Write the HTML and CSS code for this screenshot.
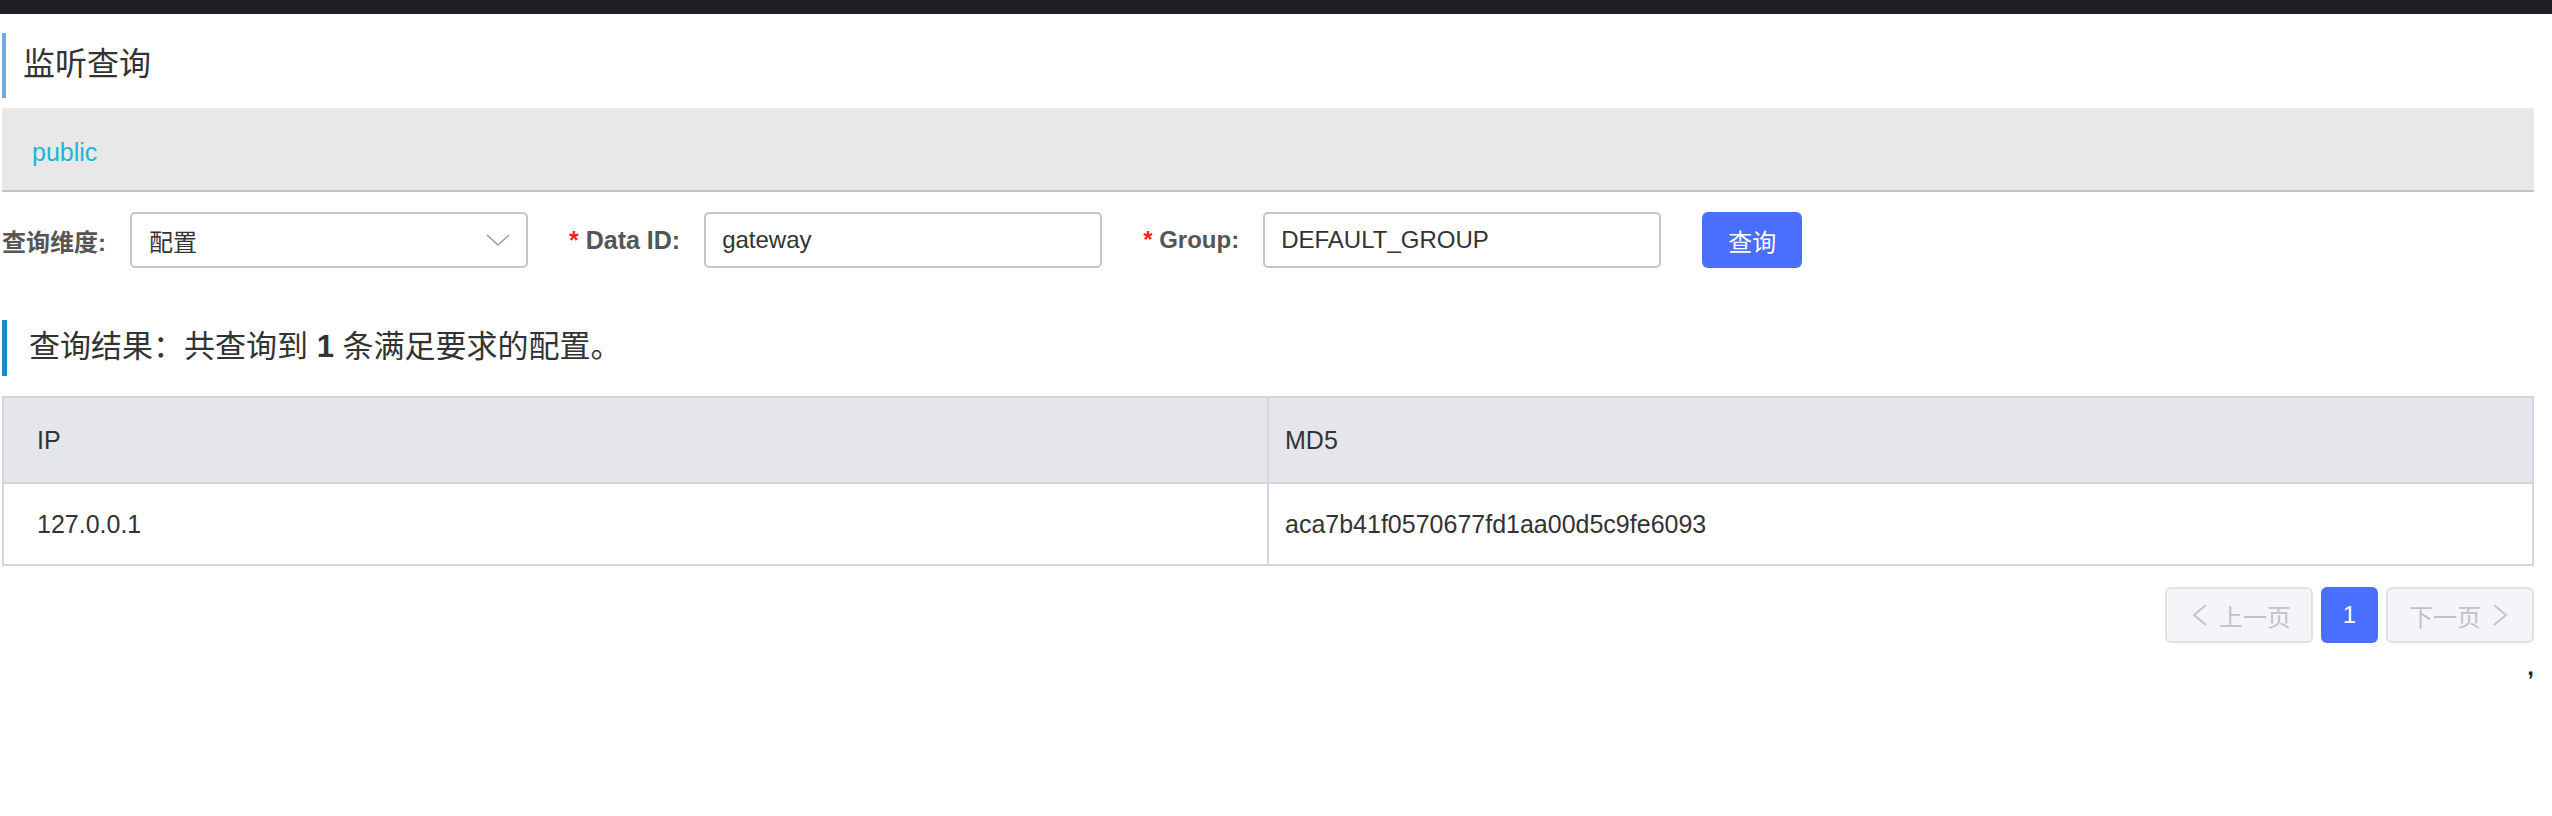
FILE: index.html
```html
<!DOCTYPE html>
<html lang="zh-CN">
<head>
<meta charset="utf-8">
<title>监听查询</title>
<link rel="stylesheet" href="styles.css">
</head>
<body>
<div class="topbar"></div>
<div class="page">
  <h1 class="page-title">监听查询</h1>
  <div class="ns-bar"><span class="ns-item">public</span></div>
  <div class="query-form">
    <div class="form-item">
      <label class="form-label">查询维度:</label>
      <div class="select">
        <span class="select-value">配置</span>
        <svg class="select-arrow" width="24" height="12" viewBox="0 0 24 12"><polyline points="1,1 12,11 23,1" fill="none" stroke="#9a9a9a" stroke-width="1.5"/></svg>
      </div>
    </div>
    <div class="form-item">
      <label class="form-label form-label-latin"><span class="req">*</span> Data ID:</label>
      <div class="input">gateway</div>
    </div>
    <div class="form-item">
      <label class="form-label"><span class="req">*</span> Group:</label>
      <div class="input">DEFAULT_GROUP</div>
    </div>
    <button class="btn-primary" type="button">查询</button>
  </div>
  <h2 class="result-title">查询结果：共查询到 <strong>1</strong> 条满足要求的配置。</h2>
  <table class="result-table">
    <thead>
      <tr><th class="col-ip">IP</th><th class="col-md5">MD5</th></tr>
    </thead>
    <tbody>
      <tr><td class="col-ip">127.0.0.1</td><td class="col-md5">aca7b41f0570677fd1aa00d5c9fe6093</td></tr>
    </tbody>
  </table>
  <div class="pagination">
    <button class="pg-btn pg-prev" type="button"><svg width="16" height="22" viewBox="0 0 16 22"><polyline points="14,1 2,11 14,21" fill="none" stroke="#c4c4c4" stroke-width="2"/></svg><span>上一页</span></button>
    <button class="pg-btn pg-current" type="button">1</button>
    <button class="pg-btn pg-next" type="button"><span>下一页</span><svg width="16" height="22" viewBox="0 0 16 22"><polyline points="2,1 14,11 2,21" fill="none" stroke="#c4c4c4" stroke-width="2"/></svg></button>
  </div>
  <div class="tail">,</div>
</div>
</body>
</html>
```
FILE: styles.css
```css
* { box-sizing: border-box; }
html, body {
  margin: 0;
  padding: 0;
  background: #ffffff;
  font-family: "Liberation Sans", "Noto Sans CJK SC", sans-serif;
  color: #333333;
}
.topbar {
  height: 14px;
  background: #1d1f24;
}
.page {
  padding: 0 18px 0 2px;
}
.page-title {
  margin: 19px 0 0 0;
  height: 65px;
  line-height: 63px;
  border-left: 4px solid #74a8d8;
  padding-left: 17px;
  font-size: 32px;
  font-weight: normal;
  color: #333333;
}
.ns-bar {
  margin-top: 10px;
  height: 84px;
  background: #e8e8e8;
  border-bottom: 2px solid #c3c3c3;
  padding: 6px 0 0 30px;
  display: flex;
  align-items: center;
}
.ns-item {
  font-size: 25px;
  color: #1db5d6;
}
.query-form {
  margin-top: 20px;
  height: 56px;
  display: flex;
  align-items: center;
}
.form-item {
  display: flex;
  align-items: center;
  gap: 24px;
  margin-right: 41px;
}
.form-label {
  font-size: 24px;
  font-weight: bold;
  color: #555555;
  white-space: nowrap;
}
.form-label-latin {
  font-size: 25px;
}
.req {
  color: #ff1f1f;
}
.select, .input {
  width: 398px;
  height: 56px;
  border: 2px solid #c4c6cf;
  border-radius: 5px;
  display: flex;
  align-items: center;
  font-size: 24px;
  color: #333333;
  background: #ffffff;
}
.select {
  justify-content: space-between;
  padding: 0 16px 0 17px;
}
.input {
  padding-left: 16px;
}
.btn-primary {
  width: 100px;
  height: 56px;
  border: none;
  border-radius: 6px;
  background: #4a6efe;
  color: #ffffff;
  font-family: "Liberation Sans", "Noto Sans CJK SC", sans-serif;
  font-size: 24px;
  padding: 0;
}
.result-title {
  margin: 52px 0 0 0;
  height: 56px;
  line-height: 54px;
  border-left: 5px solid #1a8ccb;
  padding-left: 22px;
  font-size: 31px;
  font-weight: normal;
  color: #333333;
}
.result-title strong {
  font-weight: bold;
}
.result-table {
  margin-top: 20px;
  width: 100%;
  border-collapse: collapse;
  table-layout: fixed;
  border: 2px solid #d3d6dd;
  font-size: 25px;
  color: #333333;
}
.result-table th,
.result-table td {
  text-align: left;
  font-weight: normal;
  border: 2px solid #d3d6dd;
}
.result-table .col-ip {
  padding: 0 0 0 33px;
}
.result-table .col-md5 {
  padding: 0 0 0 16px;
}
.result-table th {
  height: 86px;
  background: #e4e6ec;
}
.result-table td {
  height: 82px;
}
.pagination {
  margin-top: 21px;
  display: flex;
  justify-content: flex-end;
  gap: 8px;
}
.pg-btn {
  height: 56px;
  border-radius: 6px;
  font-family: "Liberation Sans", "Noto Sans CJK SC", sans-serif;
  font-size: 24px;
  display: flex;
  align-items: center;
  padding: 0;
}
.pg-prev, .pg-next {
  width: 148px;
  background: #f4f5f9;
  border: 2px solid #dfe1e6;
  color: #c2c2c2;
  gap: 11px;
}
.pg-prev { padding-left: 25px; }
.pg-next { padding-left: 21px; }
.pg-current {
  width: 57px;
  justify-content: center;
  background: #4a6efe;
  border: none;
  color: #ffffff;
}
.tail {
  margin-top: 10px;
  text-align: right;
  font-size: 24px;
  font-weight: bold;
  color: #222222;
  line-height: 28px;
}
```
